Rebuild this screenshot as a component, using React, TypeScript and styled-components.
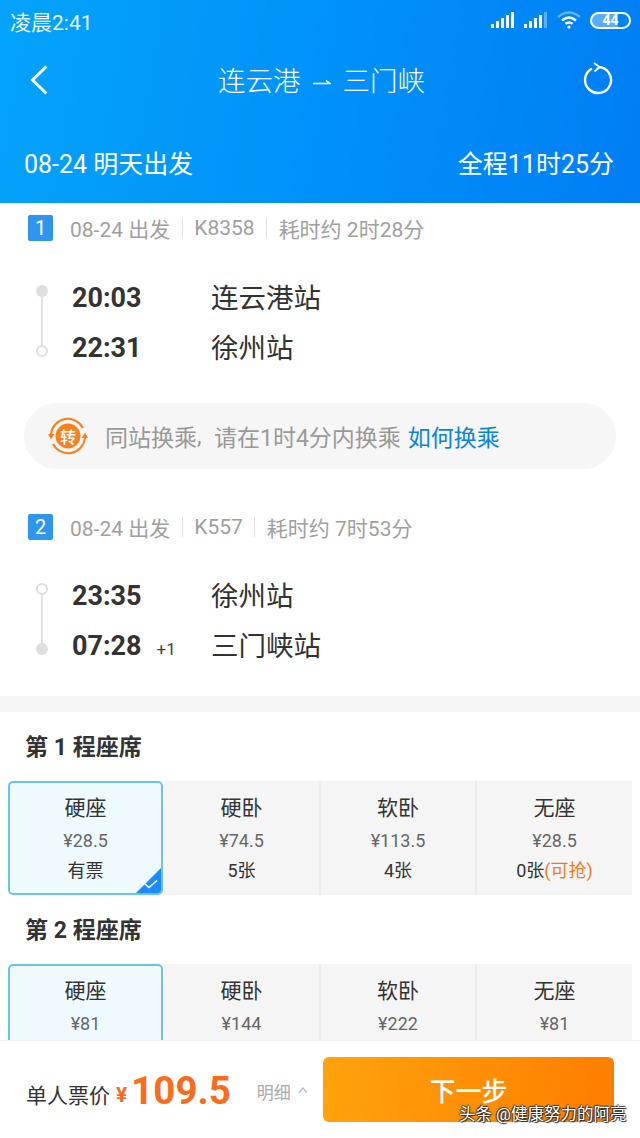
import React from "react";
import styled, { createGlobalStyle } from "styled-components";

const Global = createGlobalStyle`
  html, body { margin: 0; padding: 0; background: #fff; }
  body { font-family: Roboto, "Noto Sans CJK SC", sans-serif; }
  * { box-sizing: border-box; }
`;

const Screen = styled.div`
  position: relative;
  width: 640px;
  height: 1138px;
  display: flex;
  flex-direction: column;
  overflow: hidden;
  background: #fff;
`;

const Header = styled.header`
  flex: none;
  height: 203px;
  color: #fff;
  background: linear-gradient(100deg, #04a3fb 0%, #0090f8 55%, #007ef5 100%);
`;

const StatusBar = styled.div`
  height: 40px;
  padding: 0 9px 0 10px;
  display: flex;
  align-items: center;
  justify-content: space-between;
`;

const Clock = styled.span`
  margin-top: 2px;
  font-size: 21px;
  opacity: 0.92;
`;

const StatusIcons = styled.div`
  display: flex;
  align-items: center;
  gap: 9px;
`;

const Battery = styled.span`
  position: relative;
  width: 41px;
  height: 17px;
  border: 2px solid #fff;
  border-radius: 9px;
  display: flex;
  align-items: center;
  justify-content: center;
  font-size: 14px;
  font-weight: 700;
  line-height: 1;
  background: linear-gradient(90deg, rgba(255, 255, 255, 0.35) 70%, transparent 70%);
`;

const TitleRow = styled.div`
  height: 80px;
  padding: 0 27px 0 30px;
  display: grid;
  grid-template-columns: 1fr auto 1fr;
  align-items: center;
`;

const TitleEnd = styled.div`
  display: flex;
  justify-content: flex-end;
`;

const Route = styled.h1`
  margin: 3px 0 0;
  display: flex;
  align-items: center;
  gap: 12px;
  font-size: 27.5px;
  font-weight: 300;
  line-height: 1;
`;

const InfoRow = styled.div`
  height: 83px;
  padding: 0 26px 0 24px;
  display: flex;
  align-items: center;
  justify-content: space-between;
  font-size: 25px;
  font-weight: 400;
`;

const Body = styled.main`
  flex: 1;
  min-height: 0;
  overflow: hidden;
`;

const Leg = styled.section<{ $top: number }>`
  padding: ${(p) => p.$top}px 0 0 28px;
`;

const MetaRow = styled.div`
  height: 26px;
  display: flex;
  align-items: center;
  font-size: 21px;
  color: #a0a0a0;
`;

const LegBadge = styled.span`
  width: 25px;
  height: 26px;
  margin-right: 17px;
  border-radius: 2px;
  background: #2f96f0;
  color: #fff;
  display: flex;
  align-items: center;
  justify-content: center;
  font-size: 20px;
`;

const MetaDivider = styled.i`
  width: 1px;
  height: 20px;
  margin: 0 11.5px;
  background: #e2e2e2;
`;

const Schedule = styled.div<{ $top: number }>`
  margin-top: ${(p) => p.$top}px;
  display: flex;
  padding-left: 8px;
`;

const Rail = styled.div`
  width: 12px;
  margin-right: 24px;
  padding-top: 13px;
  display: flex;
  flex-direction: column;
  align-items: center;
`;

const RailDot = styled.span<{ $hollow?: boolean }>`
  flex: none;
  width: 12px;
  height: 12px;
  border-radius: 50%;
  background: ${(p) => (p.$hollow ? "#fff" : "#dedede")};
  border: ${(p) => (p.$hollow ? "2px solid #dedede" : "none")};
`;

const RailLine = styled.span`
  width: 2px;
  height: 48px;
  background: #e0e0e0;
`;

const Stops = styled.div`
  display: flex;
  flex-direction: column;
`;

const Stop = styled.div`
  height: 50px;
  display: flex;
  align-items: center;
`;

const Time = styled.span`
  width: 139px;
  margin-top: 2px;
  display: flex;
  align-items: baseline;
  font-size: 27px;
  font-weight: 700;
  color: #333;
`;

const NextDay = styled.small`
  margin-left: 15px;
  font-size: 17px;
  font-weight: 400;
  color: #444;
`;

const Station = styled.span`
  margin-bottom: 3px;
  font-size: 27.5px;
  color: #333;
`;

const TransferPill = styled.div`
  height: 66px;
  margin: 31px 24px 0;
  padding-left: 24px;
  border-radius: 33px;
  background: #f6f6f6;
  display: flex;
  align-items: center;
  font-size: 23px;
  color: #999;
`;

const TransferIcon = styled.span`
  position: relative;
  width: 40px;
  height: 40px;
  margin-right: 17px;
  display: flex;
  align-items: center;
  justify-content: center;
  color: #fff;
  font-size: 16px;
  font-weight: 500;
`;

const TransferGlyph = styled.svg`
  position: absolute;
  inset: 0;
`;

const TransferChar = styled.span`
  position: relative;
`;

const Comma = styled.span`
  width: 17px;
`;

const HowTo = styled.a`
  margin-left: 7px;
  color: #0a84e0;
`;

const Band = styled.div`
  height: 16px;
  margin-top: 26px;
  background: #f5f5f5;
`;

const SeatTitle = styled.h2`
  height: 30px;
  margin: 18px 0 21px;
  padding-left: 25px;
  display: flex;
  align-items: center;
  font-size: 23px;
  font-weight: 700;
  color: #333;
  white-space: pre;
`;

const SeatGrid = styled.div`
  margin: 0 8px;
  display: grid;
  grid-template-columns: 156px 157px 156px 155px;
`;

const SeatCell = styled.div<{ $selected?: boolean }>`
  position: relative;
  height: 114px;
  padding-top: ${(p) => (p.$selected ? "10px" : "12px")};
  display: flex;
  flex-direction: column;
  align-items: center;
  overflow: hidden;
  background: ${(p) => (p.$selected ? "#effaff" : "#f5f5f5")};
  border: ${(p) => (p.$selected ? "2px solid #6cc3e8" : "none")};
  border-right: ${(p) => (p.$selected ? "2px solid #6cc3e8" : "2px solid #ececec")};
  border-radius: ${(p) => (p.$selected ? "5px" : "0")};
  margin-right: ${(p) => (p.$selected ? "1px" : "0")};
  &:last-child { border-right: none; }
`;

const SeatName = styled.span`
  height: 30px;
  line-height: 30px;
  font-size: 21px;
  color: #333;
`;

const SeatPrice = styled.span`
  height: 30px;
  line-height: 30px;
  margin-top: 3px;
  font-size: 18px;
  color: #666;
`;

const SeatStock = styled.span`
  height: 30px;
  line-height: 30px;
  font-size: 18px;
  color: #333;
`;

const GrabTag = styled.span`
  color: #f07a1c;
`;

const SelectedCorner = styled.span`
  position: absolute;
  right: -1px;
  bottom: -1px;
  width: 27px;
  height: 27px;
  background: #1a8cff;
  clip-path: polygon(100% 0, 100% 100%, 0 100%);
`;

const SelectedCheck = styled.svg`
  position: absolute;
  right: 3px;
  bottom: 4px;
`;

const Footer = styled.footer`
  flex: none;
  height: 98px;
  padding: 16px 26px 0 26px;
  background: #fff;
  border-top: 1px solid #eee;
  display: flex;
  align-items: flex-start;
`;

const PriceArea = styled.div`
  width: 297px;
  height: 65px;
  display: flex;
  align-items: center;
`;

const PriceLabel = styled.span`
  margin-top: 9px;
  font-size: 21px;
  color: #333;
`;

const Yen = styled.span`
  margin: 10px 4px 0 6px;
  font-size: 21px;
  font-weight: 700;
  color: #fa6c1c;
`;

const Amount = styled.span`
  margin-top: 2px;
  font-size: 38.5px;
  font-weight: 700;
  color: #fa6c1c;
`;

const Details = styled.span`
  margin: 3px 7px 0 26px;
  font-size: 17px;
  color: #aaa;
`;

const NextButton = styled.button`
  width: 291px;
  height: 65px;
  padding: 0;
  border: none;
  border-radius: 6px;
  background: linear-gradient(100deg, #ffa30c 0%, #ff7d00 100%);
  color: #fff;
  font-family: inherit;
  font-size: 26px;
  font-weight: 500;
`;

const Watermark = styled.span`
  position: absolute;
  left: 459px;
  top: 1104px;
  font-size: 16.5px;
  line-height: 22px;
  color: #fff;
  text-shadow: 1px 1px 1px #222, -1px 0 1px #222, 0 -1px 1px #333;
`;

const Signal = ({ dim }: { dim?: boolean }) => (
  <svg width="24" height="18" viewBox="0 0 24 18" fill="#fff">
    <rect x="0" y="13" width="3" height="4" />
    <rect x="5" y="10" width="3" height="7" />
    <rect x="10" y="7" width="3" height="10" />
    <rect x="15" y="4" width="3" height="13" />
    <rect x="20" y="1" width="3" height="16" opacity={dim ? 0.35 : 1} />
  </svg>
);

const Wifi = () => (
  <svg width="24" height="18" viewBox="0 0 24 18" fill="none" stroke="#fff" strokeWidth="2.4">
    <path d="M1 6 Q12 -3 23 6" opacity="0.4" />
    <path d="M5 9.5 Q12 3.5 19 9.5" />
    <path d="M8.5 12.8 Q12 10 15.5 12.8" />
    <circle cx="12" cy="16" r="1.6" fill="#fff" stroke="none" />
  </svg>
);

const BackArrow = () => (
  <svg width="18" height="30" viewBox="0 0 18 30" fill="none" stroke="#fff" strokeWidth="3">
    <path d="M16.5 1.5 L2.5 15 L16.5 28.5" />
  </svg>
);

const Refresh = () => (
  <svg width="30" height="40" viewBox="0 0 30 40" fill="none" stroke="#fff" strokeWidth="2.4">
    <path d="M15 7 A13 13 0 1 1 9 8.5" />
    <path d="M11 3 L16.5 7 L11.5 11.5" strokeWidth="2" />
  </svg>
);

const SmallArrow = () => (
  <svg width="18" height="8" viewBox="0 0 18 8" fill="none" stroke="#fff" strokeWidth="1.5">
    <path d="M0 5.5 H17 L13 2.5" />
  </svg>
);

const Caret = () => (
  <svg width="10" height="6" viewBox="0 0 10 6" fill="none" stroke="#bbb" strokeWidth="1.3">
    <path d="M1 5.5 L5 1 L9 5.5" />
  </svg>
);

const TransferMark = () => (
  <TransferGlyph width="40" height="40" viewBox="0 0 40 40" fill="none">
    <circle cx="20" cy="20" r="12.5" fill="#f5821f" />
    <path d="M3 18 A17 17 0 0 1 35 12" stroke="#f5821f" strokeWidth="2" />
    <path d="M37 22 A17 17 0 0 1 5 28" stroke="#f5821f" strokeWidth="2" />
    <path d="M0 18 L6.5 18 L3 23.5 Z" fill="#f5821f" />
    <path d="M33.5 22 L40 22 L37 16.5 Z" fill="#f5821f" />
  </TransferGlyph>
);

type Seat = { name: string; price: string; stock?: string; grab?: boolean; selected?: boolean };

const firstSeats: Seat[] = [
  { name: "硬座", price: "¥28.5", stock: "有票", selected: true },
  { name: "硬卧", price: "¥74.5", stock: "5张" },
  { name: "软卧", price: "¥113.5", stock: "4张" },
  { name: "无座", price: "¥28.5", stock: "0张", grab: true },
];

const secondSeats: Seat[] = [
  { name: "硬座", price: "¥81", selected: true },
  { name: "硬卧", price: "¥144" },
  { name: "软卧", price: "¥222" },
  { name: "无座", price: "¥81" },
];

const SeatOptions = ({ seats }: { seats: Seat[] }) => (
  <SeatGrid>
    {seats.map((s) => (
      <SeatCell key={s.name} $selected={s.selected}>
        <SeatName>{s.name}</SeatName>
        <SeatPrice>{s.price}</SeatPrice>
        {s.stock && (
          <SeatStock>
            {s.stock}
            {s.grab && <GrabTag>(可抢)</GrabTag>}
          </SeatStock>
        )}
        {s.selected && (
          <>
            <SelectedCorner />
            <SelectedCheck width="14" height="10" viewBox="0 0 14 10" fill="none" stroke="#fff" strokeWidth="1.6">
              <path d="M1 5 L5 8.5 L13 1.5" />
            </SelectedCheck>
          </>
        )}
      </SeatCell>
    ))}
  </SeatGrid>
);

export default function App() {
  return (
    <Screen>
      <Global />
      <Header>
        <StatusBar>
          <Clock>凌晨2:41</Clock>
          <StatusIcons>
            <Signal />
            <Signal dim />
            <Wifi />
            <Battery>44</Battery>
          </StatusIcons>
        </StatusBar>
        <TitleRow>
          <BackArrow />
          <Route>
            连云港
            <SmallArrow />
            三门峡
          </Route>
          <TitleEnd>
            <Refresh />
          </TitleEnd>
        </TitleRow>
        <InfoRow>
          <span>08-24 明天出发</span>
          <span>全程11时25分</span>
        </InfoRow>
      </Header>

      <Body>
        <Leg $top={12}>
          <MetaRow>
            <LegBadge>1</LegBadge>
            08-24 出发
            <MetaDivider />
            K8358
            <MetaDivider />
            耗时约 2时28分
          </MetaRow>
          <Schedule $top={31}>
            <Rail>
              <RailDot />
              <RailLine />
              <RailDot $hollow />
            </Rail>
            <Stops>
              <Stop>
                <Time>20:03</Time>
                <Station>连云港站</Station>
              </Stop>
              <Stop>
                <Time>22:31</Time>
                <Station>徐州站</Station>
              </Stop>
            </Stops>
          </Schedule>
        </Leg>

        <TransferPill>
          <TransferIcon>
            <TransferMark />
            <TransferChar>转</TransferChar>
          </TransferIcon>
          同站换乘
          <Comma>,</Comma>
          请在1时4分内换乘
          <HowTo>如何换乘</HowTo>
        </TransferPill>

        <Leg $top={45}>
          <MetaRow>
            <LegBadge>2</LegBadge>
            08-24 出发
            <MetaDivider />
            K557
            <MetaDivider />
            耗时约 7时53分
          </MetaRow>
          <Schedule $top={30}>
            <Rail>
              <RailDot $hollow />
              <RailLine />
              <RailDot />
            </Rail>
            <Stops>
              <Stop>
                <Time>23:35</Time>
                <Station>徐州站</Station>
              </Stop>
              <Stop>
                <Time>
                  07:28
                  <NextDay>+1</NextDay>
                </Time>
                <Station>三门峡站</Station>
              </Stop>
            </Stops>
          </Schedule>
        </Leg>

        <Band />

        <SeatTitle>第 1 程座席</SeatTitle>
        <SeatOptions seats={firstSeats} />
        <SeatTitle>第 2 程座席</SeatTitle>
        <SeatOptions seats={secondSeats} />
      </Body>

      <Footer>
        <PriceArea>
          <PriceLabel>单人票价</PriceLabel>
          <Yen>¥</Yen>
          <Amount>109.5</Amount>
          <Details>明细</Details>
          <Caret />
        </PriceArea>
        <NextButton>下一步</NextButton>
      </Footer>
      <Watermark>头条 @健康努力的阿亮</Watermark>
    </Screen>
  );
}
